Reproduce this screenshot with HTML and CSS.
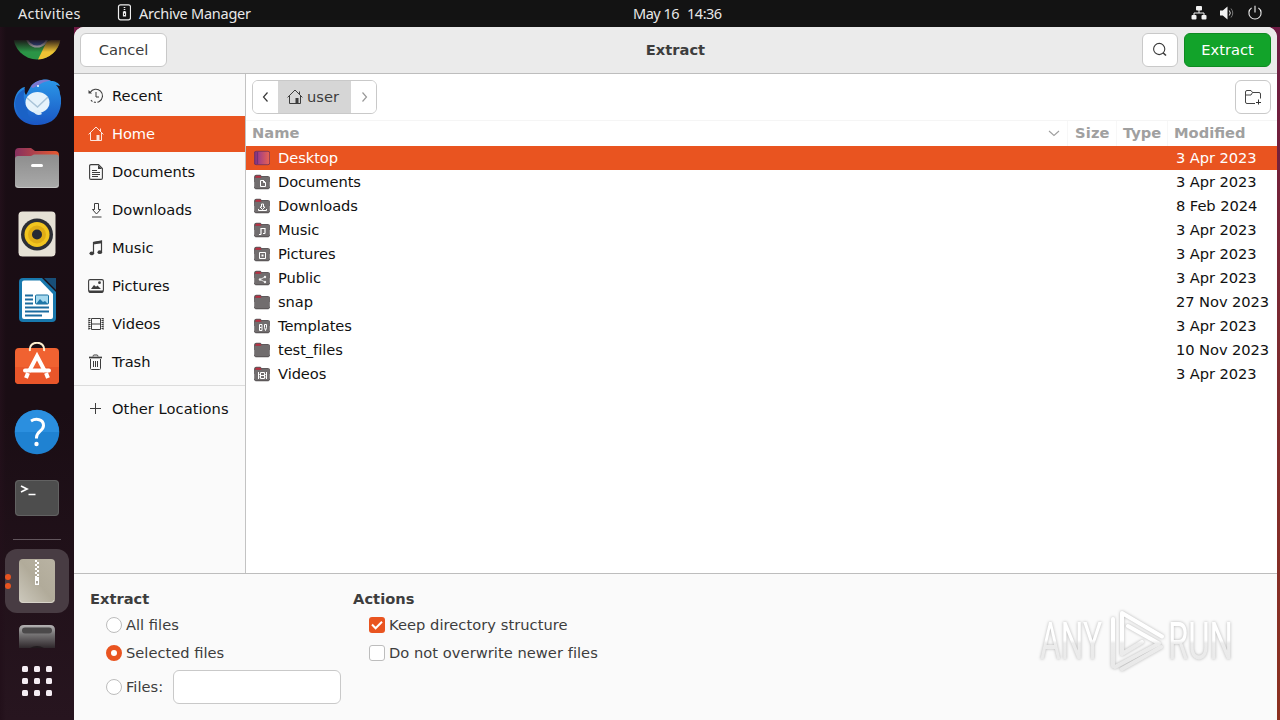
FILE: index.html
```html
<!DOCTYPE html>
<html lang="en">
<head>
<meta charset="utf-8">
<title>Extract</title>
<link rel="stylesheet" href="styles.css">
</head>
<body>
<svg class="defs" width="0" height="0" aria-hidden="true">
  <defs>
    <linearGradient id="gFolder" x1="0" x2="1"><stop offset="0" stop-color="#86305f"/><stop offset="1" stop-color="#e8592f"/></linearGradient>
    <linearGradient id="gGrey" x2="0" y2="1"><stop offset="0" stop-color="#8d8d8d"/><stop offset="1" stop-color="#aaa"/></linearGradient>
    <linearGradient id="gDesk"><stop offset="0" stop-color="#77307d"/><stop offset=".35" stop-color="#a94380"/><stop offset="1" stop-color="#ec6350"/></linearGradient>
    <linearGradient id="gBlue" x2="0" y2="1"><stop offset="0" stop-color="#2b98e8"/><stop offset="1" stop-color="#1a56c4"/></linearGradient>
    <linearGradient id="gArch" x1="1" x2="0" y2="1"><stop offset="0" stop-color="#b9b3a3"/><stop offset=".5" stop-color="#b1ab9a"/><stop offset="1" stop-color="#cdc9bd"/></linearGradient>
    <linearGradient id="gDrive" x2="0" y2="1"><stop offset="0" stop-color="#b5b3b4"/><stop offset=".4" stop-color="#777576"/><stop offset="1" stop-color="#2f282c"/></linearGradient>
    <linearGradient id="gFade" x2="0" y2="1"><stop offset="0" stop-color="#1a0d14" stop-opacity=".9"/><stop offset=".6" stop-color="#1a0d14" stop-opacity="0"/></linearGradient>
    <symbol id="home" viewBox="0 0 16 16"><path d="M.6 8.400 8 1l7.400 7.400M2.500 7v7.500h11V7M12.500 5V2.500" fill="none" stroke="currentColor"/><path d="M8.500 14.500V9h3v5.500z" fill="currentColor"/></symbol>
    <symbol id="folder" viewBox="0 0 16 16"><path d="M0 4C0 1.800.8.800 2.400.800h4l1.200 1.200h6c1.500 0 2.400.8 2.400 2.200V8H0z" fill="#5f595b"/><path d="M1.500 3.800V2.700q0-1 1-1h3.600l1.200 1.200H13.500q1 0 1 .9z" fill="#bb2f42"/><path d="M.2 5.300c0-.8.4-1.300 1.200-1.300h4.400c1 0 1.600-.9 2.600-.9h6c.9 0 1.400.4 1.400 1.200v8.700c0 1.300-.8 1.900-2 1.900H2.200c-1.300 0-2-.6-2-1.900z" fill="#716d6e"/><path d="M.4 12.800c0 1.400.8 2 1.800 2h11.600c1 0 1.800-.6 1.800-2" fill="none" stroke="#4c484a" stroke-width=".8"/></symbol>
  </defs>
</svg>

<header class="topbar">
  <span class="activities">Activities</span>
  <span class="appname">
    <svg width="14" height="17" viewBox="0 0 14 17"><rect x="1.500" y=".8" width="12" height="15" rx="2" fill="none" stroke="#eee" stroke-width="1.200"/><path d="M7.500 3v5" stroke="#eee" stroke-width="1.600" stroke-dasharray="1 1"/><path d="M5.900 7.500h3.200V12.500H5.900z" fill="#eee"/><path d="M7 9.600h1v1.400h-1z" fill="#131313"/></svg>
    <span class="appname-text">Archive Manager</span>
  </span>
  <span class="clock"><span>May 16</span><span>14:36</span></span>
  <span class="status">
    <svg width="16" height="16" viewBox="0 0 16 16"><g fill="#f2f2f2"><rect x="5" y="1" width="6" height="4.500" rx="1"/><rect x=".5" y="10" width="5" height="4.500" rx="1"/><rect x="10.500" y="10" width="5" height="4.500" rx="1"/></g><path d="M8 5v3M3 10V8h10v2" fill="none" stroke="#f2f2f2"/></svg>
    <svg width="16" height="16" viewBox="0 0 16 16"><path d="M1 5.500h2.800L8.500 1.500v13L3.800 10.500H1z" fill="#f2f2f2"/><path d="M10.300 5.500q2 2.500 0 5" fill="none" stroke="#ddd"/><path d="M12 3.500q3.500 4.500 0 9" fill="none" stroke="#777"/></svg>
    <svg width="16" height="16" viewBox="0 0 16 16"><path d="M4.600 2.900a6.100 6.100 0 1 0 6.800 0M8 .8v6.700" fill="none" stroke="#f2f2f2" stroke-width="1.100"/></svg>
  </span>
</header>

<div class="desktop">
  <nav class="dock">
    <div class="slot slot-cut">
      <svg width="48" height="20" viewBox="0 28 48 20"><circle cx="24" cy="24" r="23.500" fill="#2b9446"/><path d="M33.500 30 25 47.500a23.500 23.500 0 0 0 22.400-20V24z" fill="#efc334"/><circle cx="24" cy="24" r="11.500" fill="#d8dce6"/><circle cx="24" cy="24" r="9.500" fill="#3a63b8"/><rect y="28" width="48" height="20" fill="url(#gFade)"/></svg>
    </div>
    <div class="slot">
      <svg width="48" height="48" viewBox="0 0 48 48"><path d="M1 25C2 16 6 10 12 9c-1 3-1 5 1 8L18 8C23 2 33 0 38 3c4 0 8 2 9 5l-4-1c3 3 4 6 4 9 2 5 1 11 0 15-3 11-12 16-23 16C10 47 0 37 1 25z" fill="url(#gBlue)"/><path d="M18 9C21 3 31 0 38 3c-6 0-9 2-12 4l-6 3z" fill="#7b78cf"/><path d="M2 25C3 17 7 13 12 11c-3 9 0 15 3 20-2 6 3 11 8 12C10 44 3 36 2 25z" fill="#1a62c6"/><ellipse cx="24.500" cy="24.500" rx="12" ry="10.500" fill="#e6f3fb"/><path d="m14 20 10.500 9L35 19" fill="none" stroke="#a9c4d8" stroke-width="1.500"/><path d="M20 33c2 4 6 5 9 3l-3-4z" fill="#dcecf8"/><circle cx="25" cy="8" r="1" fill="#fff"/></svg>
    </div>
    <div class="slot">
      <svg width="48" height="48" viewBox="0 0 48 48"><path d="M2 8q0-4 4-4h12l4 3h20q4 0 4 4v10H2z" fill="url(#gFolder)"/><path d="M2 15q0-3 3-3h13l3-1.500h22q3 0 3 3v27.500q0 3-3 3H5q-3 0-3-3z" fill="url(#gGrey)"/><path d="M3 41.500q1 2 3 2h36q2 0 3-2" fill="none" stroke="#c5c5c5"/><rect x="18" y="20" width="12" height="3" rx="1.500" fill="#fff"/></svg>
    </div>
    <div class="slot">
      <svg width="48" height="48" viewBox="0 0 48 48"><rect x="5.500" y="1.500" width="37" height="45" rx="4" fill="#e6e1d6"/><circle cx="24" cy="24.500" r="16" fill="#2c2e35"/><circle cx="24" cy="24.500" r="12.500" fill="#f2c51f"/><circle cx="24" cy="24.500" r="9" fill="#e0ad16"/><circle cx="24" cy="24.500" r="5" fill="#262a35"/></svg>
    </div>
    <div class="slot">
      <svg width="48" height="48" viewBox="0 0 48 48"><path d="M10 2h19l14 14v26q0 4-4 4H10q-4 0-4-4V6q0-4 4-4z" fill="#1878ad"/><path d="M31 2h12v12z" fill="#184f79"/><path d="M11 4.500h16L40 18v23q0 2-2 2H11q-2 0-2-2V6.500q0-2 2-2z" fill="#fff"/><path d="M12 19.500h8M12 23.500h8M12 27.500h8M12 31.500h24M12 35.500h24M12 39.500h17" stroke="#1c6c9f" stroke-width="2"/><rect x="22.500" y="19" width="13" height="9" rx="1" fill="#a6d9ef" stroke="#176f9e"/><path d="m23 28 4-5 3 3 2-1 3 3z" fill="#1f77a9"/></svg>
    </div>
    <div class="slot">
      <svg width="48" height="48" viewBox="0 0 48 48"><rect x="2" y="6" width="44" height="36" rx="4" fill="#f06231"/><path d="M2 25h44v13q0 4-4 4H6q-4 0-4-4z" fill="#e9562a"/><path d="M17 9C15-2 33-2 31 9" fill="none" stroke="#fff0cf" stroke-width="2"/><path d="M16 29.500 24 14l8 15.500" fill="none" stroke="#fff" stroke-width="4"/><path d="M12 28.500h24" stroke="#fff" stroke-width="4" stroke-linecap="round"/><path d="m15 31-2 5M33 31l2 5" stroke="#fff" stroke-width="4"/></svg>
    </div>
    <div class="slot">
      <svg width="48" height="48" viewBox="0 0 48 48"><circle cx="24" cy="24" r="22.300" fill="#1f82d2"/><path d="M2 24a22 22 0 0 1 44 0z" fill="#2b8fdf"/><path d="M18 13c5-3 12.500-2 12.500 4.500 0 5.500-7 6-7 12v1" fill="none" stroke="#fff" stroke-width="3"/><circle cx="23.500" cy="36" r="2.200" fill="#fff"/></svg>
    </div>
    <div class="slot">
      <svg width="48" height="48" viewBox="0 0 48 48"><rect x="2" y="6" width="44" height="36" rx="4" fill="#4d4d4d"/><rect x="2.500" y="6.500" width="43" height="35" rx="3.500" fill="none" stroke="#626262"/><path d="m8 12 6 3-6 3M15.500 20.500h7" fill="none" stroke="#fff" stroke-width="1.700"/></svg>
    </div>
    <div class="dock-line"></div>
    <div class="tile">
      <span class="dots"><i></i><i></i></span>
      <svg width="48" height="48" viewBox="0 0 48 48"><rect x="6" y="2" width="36" height="44" rx="4" fill="url(#gArch)"/><path d="M7 43q1 2.500 3 2.500h28q2 0 3-2.500" fill="none" stroke="#d7d3c9"/><path d="M23 3v17" stroke="#fff" stroke-width="2" stroke-dasharray="2 2"/><path d="M25 5v17" stroke="#fff" stroke-width="2" stroke-dasharray="2 2"/><path d="M22 20h4v8h-4z" fill="#fff"/><path d="M23.300 24h1.400v2.500h-1.400z" fill="#837d6d"/></svg>
    </div>
    <div class="drive">
      <svg width="48" height="24" viewBox="0 0 48 24"><path d="M6 24V6q0-5 5-5h26q5 0 5 5v18z" fill="url(#gDrive)"/><rect x="9" y="3.500" width="30" height="6" rx="3" fill="#4b494a"/><path d="M17 24q7-4 14 0z" fill="#211a1e"/></svg>
    </div>
    <div class="apps"><i></i><i></i><i></i><i></i><i></i><i></i><i></i><i></i><i></i></div>
  </nav>

  <main class="window">
    <div class="titlebar">
      <button class="btn cancel">Cancel</button>
      <h1 class="title">Extract</h1>
      <button class="btn icon-btn"><svg width="16" height="16" viewBox="0 0 16 16"><circle cx="7.200" cy="7" r="5.600" fill="none" stroke="#3a3a3a" stroke-width="1.100"/><path d="m11.200 11 2.800 2.500" stroke="#3a3a3a" stroke-width="1.600"/></svg></button>
      <button class="btn go">Extract</button>
    </div>
    <div class="middle">
      <aside class="places">
        <div class="place"><svg width="16" height="16" viewBox="0 0 16 16"><path d="M2.200 4.500a6.600 6.600 0 1 1-.6 5.200" fill="none" stroke="currentColor" stroke-width="1.100" stroke-dasharray="26 1.500 2 1.500 2"/><path d="M.5 2v3.500H4z" fill="currentColor"/><path d="M8 4v5h3" fill="none" stroke="currentColor"/></svg><span>Recent</span></div>
        <div class="place active"><svg width="16" height="16"><use href="#home"/></svg><span>Home</span></div>
        <div class="place"><svg width="16" height="16" viewBox="0 0 16 16"><path d="M3 .6h7.500L14.400 4.500V14q0 1.400-1.400 1.400H3Q1.600 15.400 1.600 14V2Q1.600.6 3 .6z" fill="none" stroke="currentColor" stroke-width="1.100"/><path d="M10 1v4h4z" fill="currentColor"/><path d="M4 6.500h5M4 8.500h8M4 10.500h8M4 12.500h6" stroke="currentColor"/></svg><span>Documents</span></div>
        <div class="place"><svg width="16" height="16" viewBox="0 0 16 16"><path d="M6.500 1.500h4v6h2L8.500 12 4.500 7.500h2zM4 15h9.500" fill="none" stroke="currentColor"/></svg><span>Downloads</span></div>
        <div class="place"><svg width="16" height="16" viewBox="0 0 16 16"><path d="M5.500 13V2.500l8-1.500v11" fill="none" stroke="currentColor" stroke-width="1.200"/><path d="M5 2 14 .8v2.500L5 4.500z" fill="currentColor"/><ellipse cx="3.800" cy="13.300" rx="2.300" ry="1.900" fill="currentColor"/><ellipse cx="11.800" cy="12.200" rx="2.300" ry="1.900" fill="currentColor"/></svg><span>Music</span></div>
        <div class="place"><svg width="16" height="16" viewBox="0 0 16 16"><rect x=".6" y="1.600" width="14.800" height="12" rx="1.500" fill="none" stroke="currentColor" stroke-width="1.100"/><path d="M.5 12.500h15v1.500q-.5 1-1.500 1H2Q1 15 .5 14zM3 11l3-4 2 1.800 1.500-1.200L13 11z" fill="currentColor"/><circle cx="11.500" cy="4.700" r="1.400" fill="currentColor"/></svg><span>Pictures</span></div>
        <div class="place"><svg width="16" height="16" viewBox="0 0 16 16"><path d="M1.500 2v12M14.500 2v12" stroke="currentColor" stroke-width="2" stroke-dasharray="1 1"/><path d="M3.500 2.500h9v11h-9zM3.500 8h9" fill="none" stroke="currentColor"/><path d="M.9 2v12M15.100 2v12" stroke="currentColor" stroke-width=".7"/></svg><span>Videos</span></div>
        <div class="place"><svg width="16" height="16" viewBox="0 0 16 16"><path d="M2.500 5v9.500q0 1 1 1h8q1 0 1-1V5M5.500 7v6M7.500 7v6M9.500 7v6M5 2.500q0-1.500 1-1.500h3q1 0 1 1.500" fill="none" stroke="currentColor"/><path d="M1 3.500h13" stroke="currentColor" stroke-width="1.700"/></svg><span>Trash</span></div>
        <hr class="places-line">
        <div class="place other"><svg width="16" height="16" viewBox="0 0 16 16"><path d="M2 7.500h11M7.500 2v11" stroke="currentColor"/></svg><span>Other Locations</span></div>
      </aside>
      <section class="browser">
        <div class="pathbar">
          <div class="crumbs">
            <button class="crumb arrow"><svg width="16" height="16" viewBox="0 0 16 16"><path d="M9.500 3.500 5.500 8l4 4.500" fill="none" stroke="#3a3a3a" stroke-width="1.200"/></svg></button>
            <button class="crumb current"><svg width="16" height="16"><use href="#home"/></svg><span>user</span></button>
            <button class="crumb arrow"><svg width="16" height="16" viewBox="0 0 16 16"><path d="M6.500 3.500 10.500 8l-4 4.500" fill="none" stroke="#999" stroke-width="1.200"/></svg></button>
          </div>
          <button class="btn icon-btn"><svg width="18" height="18" viewBox="0 0 18 18"><path d="M11 15.500H3Q1.500 15.500 1.500 14V4Q1.500 2.500 3 2.500h4L8.500 4.500H15q1.500 0 1.500 1.500v4.500M1.500 7H7L8.500 4.500" fill="none" stroke="#444"/><path d="M14.500 11.500v5M12 14.500h5" stroke="#333"/></svg></button>
        </div>
        <div class="columns">
          <span class="col name">Name<svg width="12" height="12" viewBox="0 0 12 12"><path d="m1 4 5 4.500L11 4" fill="none" stroke="#a0a0a0" stroke-width="1.100"/></svg></span>
          <span class="col size">Size</span><span class="col type">Type</span><span class="col modified">Modified</span>
        </div>
        <div class="files">
          <div class="file selected"><svg width="16" height="16" viewBox="0 0 16 16"><rect x=".3" y="1.300" width="15.400" height="13.400" rx="1.800" fill="url(#gDesk)" stroke="#6e315b" stroke-width=".8"/><path d="M3.500 2v12" stroke="#5d2a72" stroke-width=".6"/></svg><span class="fname">Desktop</span><span class="fdate">3 Apr 2023</span></div>
          <div class="file"><svg width="16" height="16" viewBox="0 0 16 16"><use href="#folder"/><path d="M6.500 6.500h3l2 2v4h-5zM9.500 6v2.500h2" fill="none" stroke="#fff"/></svg><span class="fname">Documents</span><span class="fdate">3 Apr 2023</span></div>
          <div class="file"><svg width="16" height="16" viewBox="0 0 16 16"><use href="#folder"/><path d="M7.500 6v3H6l2.500 2.500L11 9H9.500V6zM4.500 11v1.500h8V11" fill="none" stroke="#fff"/></svg><span class="fname">Downloads</span><span class="fdate">8 Feb 2024</span></div>
          <div class="file"><svg width="16" height="16" viewBox="0 0 16 16"><use href="#folder"/><path d="M7 12.500V6.500h4v5M5 12.500h2M9 11.500h2" fill="none" stroke="#fff" stroke-width="1.200"/></svg><span class="fname">Music</span><span class="fdate">3 Apr 2023</span></div>
          <div class="file"><svg width="16" height="16" viewBox="0 0 16 16"><use href="#folder"/><path d="M5.500 6.500h6v6h-6z" fill="none" stroke="#fff"/><path d="M7.500 8.500h2v2h-2z" fill="#fff"/></svg><span class="fname">Pictures</span><span class="fdate">3 Apr 2023</span></div>
          <div class="file"><svg width="16" height="16" viewBox="0 0 16 16"><use href="#folder"/><path d="m11 7-5 2.500 5 2.500" fill="none" stroke="#ddd"/><g fill="#eee"><circle cx="6" cy="9.500" r="1.200"/><circle cx="11" cy="7" r="1.200"/><circle cx="11" cy="12" r="1.200"/></g></svg><span class="fname">Public</span><span class="fdate">3 Apr 2023</span></div>
          <div class="file"><svg width="16" height="16"><use href="#folder"/></svg><span class="fname">snap</span><span class="fdate">27 Nov 2023</span></div>
          <div class="file"><svg width="16" height="16" viewBox="0 0 16 16"><use href="#folder"/><path d="M5.500 6.500h2.500v6H5.500zM5.500 9.500h2M10.500 6.500h2v3l-1 3-1-3z" fill="none" stroke="#fff"/></svg><span class="fname">Templates</span><span class="fdate">3 Apr 2023</span></div>
          <div class="file"><svg width="16" height="16"><use href="#folder"/></svg><span class="fname">test_files</span><span class="fdate">10 Nov 2023</span></div>
          <div class="file"><svg width="16" height="16" viewBox="0 0 16 16"><use href="#folder"/><path d="M6.500 6.500h4v6h-4zM6.500 9.500h4M4.500 6v7M12.500 6v7" fill="none" stroke="#fff"/><path d="M4 8.500h2.500M4 11h2.500M10.500 8.500H13M10.500 11H13" stroke="#fff" stroke-width=".7"/></svg><span class="fname">Videos</span><span class="fdate">3 Apr 2023</span></div>
        </div>
      </section>
    </div>
    <div class="options">
      <fieldset class="group extract">
        <h2 class="group-title">Extract</h2>
        <label class="opt"><i class="radio"></i>All files</label>
        <label class="opt"><i class="radio on"></i>Selected files</label>
        <label class="opt files-opt"><i class="radio"></i>Files:<input class="pattern" type="text"></label>
      </fieldset>
      <fieldset class="group actions">
        <h2 class="group-title">Actions</h2>
        <label class="opt"><i class="check on"><svg width="16" height="16" viewBox="0 0 16 16"><path d="m3 7.500 3.600 3.700L13 4.700" fill="none" stroke="#fff" stroke-width="2"/></svg></i>Keep directory structure</label>
        <label class="opt"><i class="check"></i>Do not overwrite newer files</label>
      </fieldset>
      <svg class="brand" width="204" height="72" viewBox="0 0 204 72">
        <defs>
          <linearGradient id="gMark" gradientUnits="userSpaceOnUse" x1="0" y1="4" x2="0" y2="66"><stop offset="0" stop-color="#fff"/><stop offset=".47" stop-color="#fff"/><stop offset=".52" stop-color="#ececec"/><stop offset="1" stop-color="#e8e8e8"/></linearGradient>
        </defs>
        <g class="brand-art">
          <text class="brand-text" x="4" y="52" textLength="62" lengthAdjust="spacingAndGlyphs">ANY</text>
          <text class="brand-text" x="132" y="52" textLength="65" lengthAdjust="spacingAndGlyphs">RUN</text>
          <g fill="none" stroke="url(#gMark)" stroke-width="4" stroke-linejoin="round" stroke-linecap="round">
            <path d="M86 46V6l40 23.500M77 12v47M92 19l31 17.500L79 60M86 47l20-12M86 62l39-22"/>
          </g>
        </g>
      </svg>
    </div>
  </main>
</div>
</body>
</html>
```
FILE: styles.css
```css
* { box-sizing: border-box; }
body {
  margin: 0;
  width: 1280px;
  height: 720px;
  overflow: hidden;
  display: flex;
  flex-direction: column;
  background: #131313;
  font: 14.67px/18px "DejaVu Sans", sans-serif;
  color: #3d3d3d;
}
.defs { position: absolute; }
svg { display: block; flex: none; }
button { font: inherit; color: inherit; margin: 0; }

.topbar {
  height: 27px;
  flex: none;
  display: grid;
  grid-template-columns: 117px 516px 1fr auto;
  align-items: center;
  padding: 0 17px 2px 0;
  background: #131313;
  color: #e8e8e8;
  font: 14.5px/24px "Noto Sans", sans-serif;
}
.activities { padding-left: 18px; letter-spacing: .22px; }
.appname { display: flex; align-items: center; gap: 8px; }
.appname-text { letter-spacing: -.24px; }
.clock { display: flex; gap: 8px; letter-spacing: -.5px; }
.status { display: flex; gap: 12px; }

.desktop {
  flex: 1;
  display: flex;
  padding-right: 3px;
  background: linear-gradient(#6d1a43, #7c2a30 45%, #8c301f);
}
.dock {
  width: 74px;
  flex: none;
  display: flex;
  flex-direction: column;
  align-items: center;
  background: linear-gradient(90deg, #22101a, transparent 6px), linear-gradient(#190d14, #1a0d14 55%, #27151f);
}
.slot { height: 66px; flex: none; display: flex; align-items: center; }
.slot-cut { height: 42px; align-items: flex-start; padding-top: 13px; }
.dock-line { width: 48px; height: 1px; margin: 8px 0 9px; background: #62565d; }
.tile {
  width: 64px;
  height: 64px;
  display: flex;
  align-items: center;
  justify-content: center;
  position: relative;
  border-radius: 12px;
  background: #483c43;
}
.dots { position: absolute; left: 0; top: 25px; display: grid; gap: 3px; }
.dots i { width: 6px; height: 6px; border-radius: 50%; background: #e95420; }
.drive { margin-top: 11px; }
.apps { margin-top: 18px; display: grid; grid-template-columns: repeat(3, 6px); gap: 6px; }
.apps i { height: 6px; border-radius: 1.5px; background: #f5edf3; }

.window {
  flex: 1;
  display: flex;
  flex-direction: column;
  overflow: hidden;
  border-radius: 10px 10px 0 0;
  background: #fff;
}
.titlebar {
  height: 47px;
  flex: none;
  display: flex;
  align-items: center;
  gap: 6px;
  padding: 0 6px;
  background: #ebebeb;
  border-bottom: 1px solid #bdbdbd;
}
.btn {
  height: 34px;
  border: 1px solid #c9c9c9;
  border-radius: 6px;
  background: #fff;
  padding: 0;
}
.cancel { width: 87px; }
.go { width: 87px; background: #12a32a; border-color: #0e8a22; color: #fff; }
.icon-btn { width: 36px; display: flex; align-items: center; justify-content: center; }
.title { flex: 1; margin: 0; padding-left: 42px; text-align: center; font-size: 14.67px; line-height: 18px; }

.middle { height: 499px; flex: none; display: flex; }
.places {
  width: 172px;
  flex: none;
  display: flex;
  flex-direction: column;
  gap: 2px;
  padding-top: 4px;
  background: #fafafa;
  border-right: 1px solid #c3c3c3;
  color: #111;
  letter-spacing: -.06px;
}
.place { height: 36px; display: flex; align-items: center; gap: 8px; padding-left: 14px; white-space: nowrap; }
.place svg { color: #3d3d3d; }
.place.active { background: #e95420; color: #fff; }
.place.active svg { color: #fff; opacity: .85; }
.place.other { letter-spacing: .05px; }
.places-line { width: 100%; height: 1px; margin: 3px 0; border: 0; background: #dcdcdc; }

.browser { flex: 1; display: flex; flex-direction: column; color: #111; }
.pathbar { height: 46px; flex: none; display: flex; align-items: center; justify-content: space-between; padding: 0 6px; color: #3d3d3d; }
.crumbs { height: 34px; display: flex; border: 1px solid #c9c9c9; border-radius: 6px; overflow: hidden; }
.crumb { display: flex; align-items: center; justify-content: center; padding: 0; border: 0; background: #fff; }
.crumb.arrow { width: 25px; }
.crumb.current { width: 73px; gap: 4px; padding-right: 3px; background: #d6d6d6; }
.crumb.current svg { color: #3d3d3d; }
.columns { height: 26px; flex: none; display: flex; border-top: 1px solid #f5f5f5; color: #a0a0a0; font-weight: bold; }
.col { height: 25px; line-height: 25px; padding-bottom: 1px; border-left: 1px solid #f7f7f7; line-height: 24px; }
.col.name { width: 821px; display: flex; align-items: center; justify-content: space-between; padding: 0 7px 1px 6px; border: 0; }
.col.size { width: 49px; padding-left: 7px; letter-spacing: .15px; }
.col.type { width: 51px; padding-left: 6px; }
.col.modified { padding-left: 6px; }
.file { height: 24px; display: flex; align-items: center; gap: 8px; padding-left: 8px; letter-spacing: -.07px; }
.file.selected { background: #e95420; color: #fff; }
.fname { flex: 1; }
.fdate { width: 101px; white-space: nowrap; }

.options { flex: 1; display: flex; padding: 16px 0 0 16px; background: #fafafa; border-top: 1px solid #bdbdbd; }
.group { margin: 0; padding: 0; border: 0; flex: none; }
.group.extract { width: 263px; }
.group.actions { width: 670px; letter-spacing: .04px; }
.group-title { margin: 0; font-size: 14.67px; line-height: 18px; }
.opt { height: 28px; margin-left: 16px; display: flex; align-items: center; gap: 4px; }
.group-title + .opt { margin-top: 3px; }
.radio, .check { width: 16px; height: 16px; flex: none; border: 1px solid #bdbdbd; background: #fff; }
.radio { border-radius: 50%; }
.radio.on { border: 5.5px solid #e95420; }
.check { border-radius: 3px; }
.check.on { border: 0; background: #e95420; }
.files-opt { height: 34px; margin-top: 3px; }
.pattern { width: 168px; height: 34px; margin: 0 0 0 6px; border: 1px solid #c9c9c9; border-radius: 6px; background: #fff; }
.brand { margin: 17px 0 0 13px; overflow: visible; }
.brand-art { filter: drop-shadow(0 0 1.5px rgba(0, 0, 0, .28)); }
.brand-text { font: 51px "Roboto", sans-serif; fill: url(#gMark); }
```
